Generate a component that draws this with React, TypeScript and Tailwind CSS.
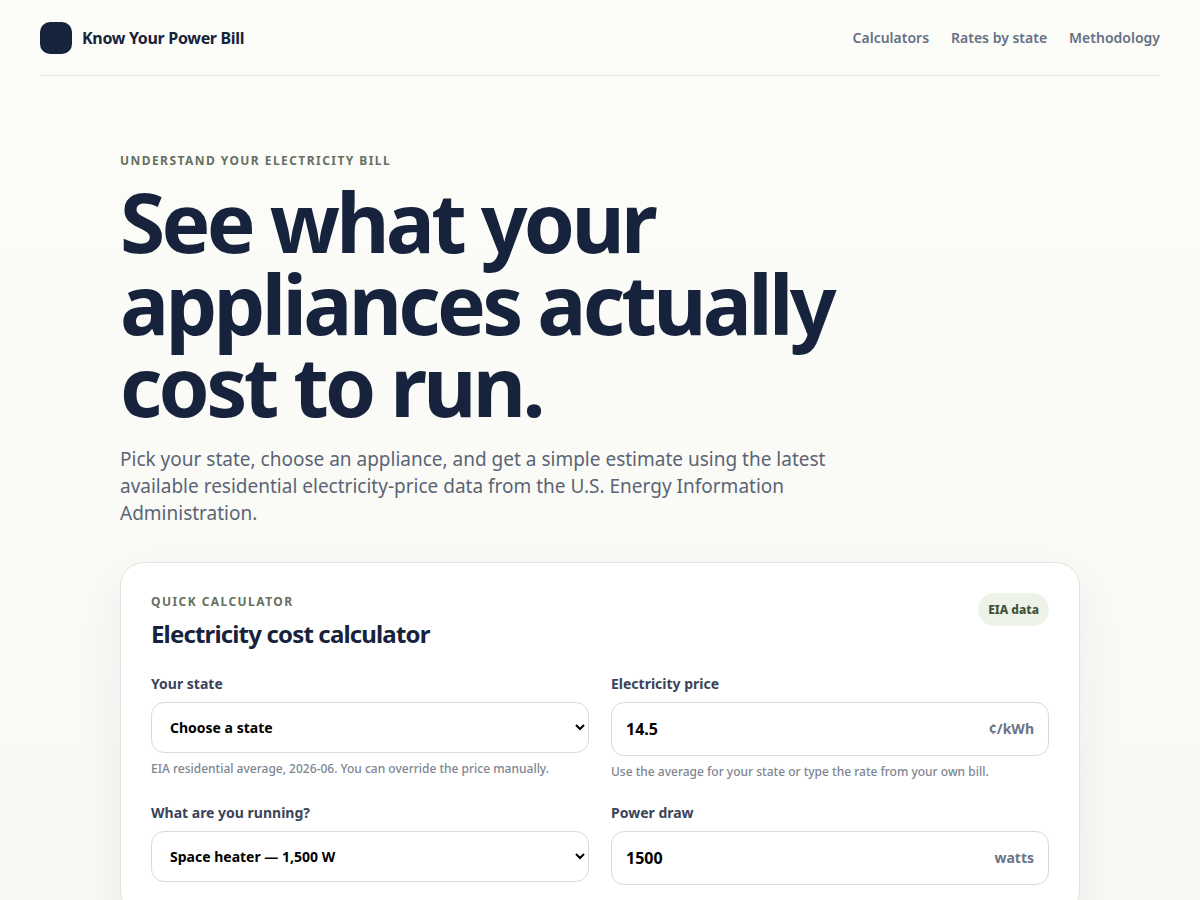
"use client";

import React, { useState } from "react";

const STATES = [
  { code: "CA", name: "California", rate: "31.2" },
  { code: "FL", name: "Florida", rate: "15.1" },
  { code: "NY", name: "New York", rate: "25.4" },
  { code: "TX", name: "Texas", rate: "15.6" },
];

const APPLIANCES = [
  { id: "heater", label: "Space heater — 1,500 W", watts: "1500" },
  { id: "ac", label: "Window AC — 1,000 W", watts: "1000" },
  { id: "fridge", label: "Refrigerator — 150 W", watts: "150" },
];

const eyebrowClass = "text-xs leading-[18px] font-bold tracking-[0.12em] text-[#667060] uppercase";
const labelClass = "mb-2 block text-sm leading-5 font-bold text-[#3a445a]";
const selectClass =
  "block h-[51px] w-full rounded-[13px] border border-[#d8dbd8] bg-white px-3.5 text-sm font-bold text-black";
const boxClass =
  "flex h-[54px] items-center rounded-[13px] border border-[#d8dbd8] bg-white px-3.5";
const inputClass = "w-full min-w-0 flex-1 bg-transparent text-base font-bold text-black outline-none";
const unitClass = "text-sm font-bold text-[#6b7488]";
const hintClass = "mt-[7px] text-xs leading-[18px] font-medium text-[#7d8592]";

export default function App() {
  const [state, setState] = useState("");
  const [price, setPrice] = useState("14.5");
  const [appliance, setAppliance] = useState("heater");
  const [watts, setWatts] = useState("1500");

  const pickState = (code: string) => {
    setState(code);
    const match = STATES.find((s) => s.code === code);
    if (match) setPrice(match.rate);
  };

  const pickAppliance = (id: string) => {
    setAppliance(id);
    const match = APPLIANCES.find((a) => a.id === id);
    if (match) setWatts(match.watts);
  };

  return (
    <div className="min-h-screen bg-linear-to-b from-[#fcfdf9] to-[#f8f9f4] px-10 pb-20 font-['Noto_Sans',sans-serif] text-[#17233c]">
      <header className="flex h-19 items-center justify-between border-b border-[#e3e6e0]">
        <a href="#" className="flex items-center gap-2.5 font-bold tracking-[-0.02em]">
          <span className="size-8 rounded-[10px] bg-[#17233c]" />
          Know Your Power Bill
        </a>
        <nav className="flex gap-[22px] text-sm font-semibold text-[#667085]">
          <a href="#calculators">Calculators</a>
          <a href="#rates">Rates by state</a>
          <a href="#methodology">Methodology</a>
        </nav>
      </header>

      <main className="mx-auto max-w-[960px] pt-[76px]">
        <p className={eyebrowClass}>Understand your electricity bill</p>
        <h1 className="mt-2.5 max-w-[780px] text-[82px] leading-[82px] font-bold tracking-[-0.045em]">
          See what your appliances actually cost to run.
        </h1>
        <p className="mt-5 max-w-[720px] text-[19px] leading-[27px] text-[#5a6475]">
          Pick your state, choose an appliance, and get a simple estimate using the latest available
          residential electricity-price data from the U.S. Energy Information Administration.
        </p>

        <section
          id="calculators"
          className="mt-[35px] rounded-3xl border border-[#e0e3de] bg-white p-[30px] shadow-[0_18px_50px_rgba(23,35,60,0.06)]"
        >
          <div className="flex items-start justify-between">
            <div>
              <p className={eyebrowClass}>Quick calculator</p>
              <h2 className="mt-2 text-2xl leading-[30px] font-bold tracking-[-0.035em]">
                Electricity cost calculator
              </h2>
            </div>
            <span className="rounded-full bg-[#edf3e9] px-2.5 py-2 text-xs leading-[17px] font-extrabold text-[#3f5239]">
              EIA data
            </span>
          </div>

          <form className="mt-[25px] grid grid-cols-2 gap-[22px]">
            <div>
              <label htmlFor="state" className={labelClass}>Your state</label>
              <select
                id="state"
                className={selectClass}
                value={state}
                onChange={(e) => pickState(e.target.value)}
              >
                <option value="">Choose a state</option>
                {STATES.map((s) => (
                  <option key={s.code} value={s.code}>{s.name}</option>
                ))}
              </select>
              <p className={hintClass}>
                EIA residential average, 2026-06. You can override the price manually.
              </p>
            </div>

            <div>
              <label htmlFor="price" className={labelClass}>Electricity price</label>
              <div className={boxClass}>
                <input
                  id="price"
                  className={inputClass}
                  inputMode="decimal"
                  value={price}
                  onChange={(e) => setPrice(e.target.value)}
                />
                <span className={unitClass}>¢/kWh</span>
              </div>
              <p className={hintClass}>
                Use the average for your state or type the rate from your own bill.
              </p>
            </div>

            <div>
              <label htmlFor="appliance" className={labelClass}>What are you running?</label>
              <select
                id="appliance"
                className={selectClass}
                value={appliance}
                onChange={(e) => pickAppliance(e.target.value)}
              >
                {APPLIANCES.map((a) => (
                  <option key={a.id} value={a.id}>{a.label}</option>
                ))}
              </select>
            </div>

            <div>
              <label htmlFor="watts" className={labelClass}>Power draw</label>
              <div className={boxClass}>
                <input
                  id="watts"
                  className={inputClass}
                  inputMode="numeric"
                  value={watts}
                  onChange={(e) => setWatts(e.target.value)}
                />
                <span className={unitClass}>watts</span>
              </div>
            </div>
          </form>
        </section>
      </main>
    </div>
  );
}
